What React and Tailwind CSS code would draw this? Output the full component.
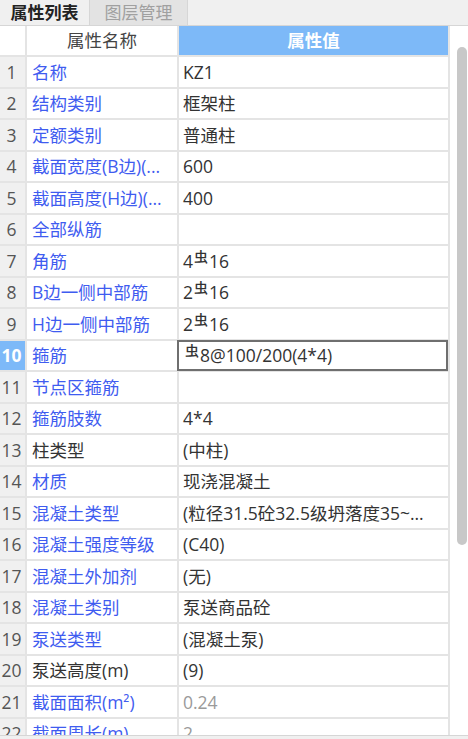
const rows = [
  { name: '名称', value: 'KZ1' },
  { name: '结构类别', value: '框架柱' },
  { name: '定额类别', value: '普通柱' },
  { name: '截面宽度(B边)(...', value: '600' },
  { name: '截面高度(H边)(...', value: '400' },
  { name: '全部纵筋', value: '' },
  { name: '角筋', value: '4', bar: '16' },
  { name: 'B边一侧中部筋', value: '2', bar: '16' },
  { name: 'H边一侧中部筋', value: '2', bar: '16' },
  { name: '箍筋', value: '', bar: '8@100/200(4*4)', active: true },
  { name: '节点区箍筋', value: '' },
  { name: '箍筋肢数', value: '4*4' },
  { name: '柱类型', value: '(中柱)', plain: true },
  { name: '材质', value: '现浇混凝土' },
  { name: '混凝土类型', value: '(粒径31.5砼32.5级坍落度35~...' },
  { name: '混凝土强度等级', value: '(C40)' },
  { name: '混凝土外加剂', value: '(无)' },
  { name: '混凝土类别', value: '泵送商品砼' },
  { name: '泵送类型', value: '(混凝土泵)' },
  { name: '泵送高度(m)', value: '(9)', plain: true },
  { name: '截面面积(m²)', value: '0.24', muted: true },
  { name: '截面周长(m)', value: '2', muted: true },
];

// HRB400 rebar grade mark, small and raised
function Rebar() {
  return <span className="text-[14px] font-medium leading-none relative -top-[4px] mx-[1px]">虫</span>;
}

export default function App() {
  return (
    <div
      className="w-[468px] h-[739px] bg-white overflow-hidden flex flex-col text-[17.5px] text-[#333]"
      style={{ fontFamily: '"Open Sans", "Noto Sans CJK SC", sans-serif' }}
    >
      {/* tabs */}
      <div className="h-[26px] shrink-0 flex bg-[#f0f0f0] border-b border-[#d6d6d6] text-[17px]">
        <div className="w-[90px] flex items-center justify-center font-bold text-[#222] border-r border-[#d6d6d6]">
          属性列表
        </div>
        <div className="w-[98px] flex items-center justify-center bg-[#e3e3e3] text-[#a0a0a0] border-r border-[#d6d6d6]">
          图层管理
        </div>
      </div>

      <div className="flex-1 flex min-h-0">
        {/* table */}
        <div className="w-[450px] border-r-2 border-[#e4e4e4] overflow-hidden">
          <div className="h-[31px] flex border-b-2 border-[#e4e4e4]">
            <div className="w-[27px] border-r-2 border-[#e4e4e4] bg-white" />
            <div className="w-[152px] border-r-2 border-[#e4e4e4] flex items-center justify-center text-[#444]">
              属性名称
            </div>
            <div className="flex-1 flex items-center justify-center bg-[#7db9f8] text-white font-semibold">
              属性值
            </div>
          </div>

          {rows.map((r, i) => (
            <div key={i} className="h-[31.5px] flex border-b-2 border-[#e4e4e4]">
              <div
                className={`w-[27px] border-r-2 border-[#e4e4e4] flex items-center justify-center pr-[2px] ${
                  r.active ? 'bg-[#7db9f8] text-white font-bold' : 'bg-[#f0f0f0] text-[#555]'
                }`}
              >
                {i + 1}
              </div>
              <div
                className={`w-[152px] border-r-2 border-[#e4e4e4] flex items-center pl-[5px] whitespace-nowrap overflow-hidden ${
                  r.plain ? 'text-[#333]' : 'text-[#3f5cf0]'
                }`}
              >
                {r.name}
              </div>
              <div
                className={`flex-1 flex items-center whitespace-nowrap overflow-hidden ${
                  r.active ? 'border-2 border-[#6f6f6f] -ml-[2px] -my-[1px] pl-[5px]' : 'pl-[4px]'
                } ${r.muted ? 'text-[#9a9a9a]' : 'text-[#333]'}`}
              >
                {r.value}
                {r.bar && (
                  <>
                    <Rebar />
                    {r.bar}
                  </>
                )}
              </div>
            </div>
          ))}
        </div>

        {/* scrollbar */}
        <div className="flex-1 bg-white pt-[21px] pl-[7px]">
          <div className="w-[10px] h-[498px] rounded-full bg-[#c8c8c8]" />
        </div>
      </div>

      <div className="h-[4px] shrink-0 bg-[#f0f0f0] border-t border-[#d6d6d6]" />
    </div>
  );
}
